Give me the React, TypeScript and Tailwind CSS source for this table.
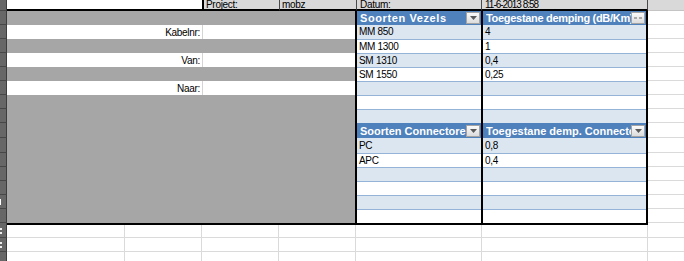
import React from 'react';

const sans = "font-['Liberation_Sans',Arial,sans-serif]";

type Band = 'blue' | 'white';
type Side =
  | { kind: 'head'; text: string; flat?: boolean; track?: string }
  | { kind: 'data'; band: Band; text?: string; rule?: boolean };

type Row = {
  tall?: boolean;
  label?: string;
  e: Side;
  f: Side;
  mark?: 'one';
};

const rows: Row[] = [
  {
    e: { kind: 'head', text: 'Soorten Vezels', track: 'tracking-[0.6px]' },
    f: { kind: 'head', text: 'Toegestane demping (dB/Km)', flat: true, track: 'tracking-[-0.3px]' },
  },
  { label: 'Kabelnr:', e: { kind: 'data', band: 'blue', text: 'MM 850' }, f: { kind: 'data', band: 'blue', text: '4' } },
  { e: { kind: 'data', band: 'white', text: 'MM 1300', rule: true }, f: { kind: 'data', band: 'white', text: '1', rule: true } },
  { label: 'Van:', e: { kind: 'data', band: 'blue', text: 'SM 1310', rule: true }, f: { kind: 'data', band: 'blue', text: '0,4', rule: true } },
  { e: { kind: 'data', band: 'white', text: 'SM 1550', rule: true }, f: { kind: 'data', band: 'white', text: '0,25', rule: true } },
  { label: 'Naar:', e: { kind: 'data', band: 'blue', rule: true }, f: { kind: 'data', band: 'blue', rule: true } },
  { e: { kind: 'data', band: 'white', rule: true }, f: { kind: 'data', band: 'white', rule: true } },
  { e: { kind: 'data', band: 'blue', rule: true }, f: { kind: 'data', band: 'blue', rule: true } },
  { tall: true, e: { kind: 'head', text: 'Soorten Connectoren' }, f: { kind: 'head', text: 'Toegestane demp. Connectoren' } },
  { tall: true, e: { kind: 'data', band: 'blue', text: 'PC' }, f: { kind: 'data', band: 'blue', text: '0,8' } },
  { e: { kind: 'data', band: 'white', text: 'APC', rule: true }, f: { kind: 'data', band: 'white', text: '0,4', rule: true } },
  { e: { kind: 'data', band: 'blue', rule: true }, f: { kind: 'data', band: 'blue', rule: true } },
  { e: { kind: 'data', band: 'white', rule: true }, f: { kind: 'data', band: 'white', rule: true } },
  { mark: 'one', e: { kind: 'data', band: 'blue', rule: true }, f: { kind: 'data', band: 'blue', rule: true } },
  { e: { kind: 'data', band: 'white', rule: true }, f: { kind: 'data', band: 'white', rule: true } },
];

function Strip({ mark }: { mark?: 'one' | 'colon' }) {
  return (
    <div className="w-[7px] shrink-0 self-stretch bg-[#676767] border-r border-r-[#3d3d3d] border-b border-b-[#474747] flex items-center">
      {mark === 'one' && <span className="block w-[1px] h-[6px] bg-white" />}
      {mark === 'colon' && (
        <span className="flex flex-col gap-[2px]">
          <span className="block w-[2px] h-[2px] bg-[#eee]" />
          <span className="block w-[2px] h-[2px] bg-[#eee]" />
        </span>
      )}
    </div>
  );
}

function FilterButton({ flat }: { flat?: boolean }) {
  return (
    <div className="shrink-0 w-[14px] h-[12px] mr-[1px] border border-[#a3a3a3] bg-linear-to-b from-[#fbfbfb] to-[#dcdcdc] flex items-center justify-center">
      {flat ? (
        <svg width="8" height="3" viewBox="0 0 8 3">
          <path d="M0 1h3M5 1h3" stroke="#666" strokeWidth="1.2" />
        </svg>
      ) : (
        <svg width="7" height="4" viewBox="0 0 7 4">
          <path d="M0 0h7L3.5 4z" fill="#5a5a5a" />
        </svg>
      )}
    </div>
  );
}

function TableCell({ side, tall }: { side: Side; tall?: boolean }) {
  if (side.kind === 'head') {
    return (
      <div className="flex items-center h-full bg-[#4f81bd] pl-[3px]">
        <span
          className={`flex-1 min-w-0 overflow-hidden whitespace-nowrap text-white font-bold text-[11px] leading-[14px] ${
            side.track ?? ''
          }`}
        >
          {side.text}
        </span>
        <FilterButton flat={side.flat} />
      </div>
    );
  }
  const lead = side.rule ? 'leading-[13px]' : tall ? 'leading-[16px]' : 'leading-[14px]';
  return (
    <div
      className={`h-full pl-[2px] text-[10px] tracking-[-0.3px] ${lead} text-black whitespace-nowrap overflow-hidden ${
        side.band === 'blue' ? 'bg-[#dce6f1]' : 'bg-white'
      } ${side.rule ? 'border-t border-t-[#95b3d7]' : ''}`}
    >
      {side.text}
    </div>
  );
}

function MidRow({ row }: { row: Row }) {
  return (
    <div className={`flex ${row.tall ? 'h-[15px]' : 'h-[14px]'}`}>
      <Strip mark={row.mark} />
      {row.label ? (
        <div className="flex w-[348px] bg-white">
          <div className="w-[196px] border-r border-r-[#d4d4d4] pr-[2px] text-right text-[10px] tracking-[-0.3px] leading-[15px] text-black">
            {row.label}
          </div>
          <div className="flex-1" />
        </div>
      ) : (
        <div className="w-[348px] bg-[#a6a6a6]" />
      )}
      <div className="w-[126px] border-l-2 border-l-black">
        <TableCell side={row.e} tall={row.tall} />
      </div>
      <div className="w-[167px] border-x-2 border-x-black">
        <TableCell side={row.f} tall={row.tall} />
      </div>
      <div className="flex-1 bg-white border-b border-b-[#dadada]" />
    </div>
  );
}

function GridRow({ tall, mark }: { tall?: boolean; mark?: 'colon' }) {
  const line = 'border-r border-r-[#dadada] border-b border-b-[#dadada] bg-white';
  return (
    <div className={`flex ${tall ? 'h-[14px]' : 'h-[13px]'}`}>
      <Strip mark={mark} />
      <div className={`w-[118px] ${line}`} />
      <div className={`w-[77px] ${line}`} />
      <div className={`w-[77px] ${line}`} />
      <div className={`w-[77px] ${line}`} />
      <div className={`w-[126px] ${line}`} />
      <div className={`w-[166px] ${line}`} />
      <div className="flex-1 bg-white border-b border-b-[#dadada]" />
    </div>
  );
}

export default function App() {
  const top =
    'bg-[#d9d9d9] border-b-2 border-b-black border-r border-r-[#4a4a4a] text-[10px] leading-[9px] text-black whitespace-nowrap overflow-hidden';
  return (
    <div className={`w-[684px] h-[261px] overflow-hidden bg-white ${sans}`}>
      {/* project info strip */}
      <div className="flex h-[11px]">
        <Strip />
        <div className="w-[197px] bg-white border-b-2 border-b-black border-r-2 border-r-black" />
        <div className={`w-[76px] pl-[2px] tracking-[-0.3px] ${top}`}>Project:</div>
        <div className={`w-[77px] pl-[2px] tracking-[-0.3px] ${top}`}>mobz</div>
        <div className={`w-[125px] pl-[3px] tracking-[-0.3px] ${top}`}>Datum:</div>
        <div className={`w-[166px] pl-[3px] tracking-[-1px] ${top}`}>11-6-2013 8:58</div>
        <div className="flex-1 bg-[#d9d9d9] border-b border-b-[#c4c4c4]" />
      </div>

      {rows.map((row, i) => (
        <MidRow key={i} row={row} />
      ))}

      {/* bottom edge of the form */}
      <div className="flex h-[2px]">
        <div className="w-[7px] bg-[#676767] border-r border-r-[#3d3d3d]" />
        <div className="w-[641px] bg-black" />
        <div className="flex-1 bg-white" />
      </div>

      <GridRow mark="colon" />
      <GridRow tall mark="colon" />
      <GridRow tall />
    </div>
  );
}
